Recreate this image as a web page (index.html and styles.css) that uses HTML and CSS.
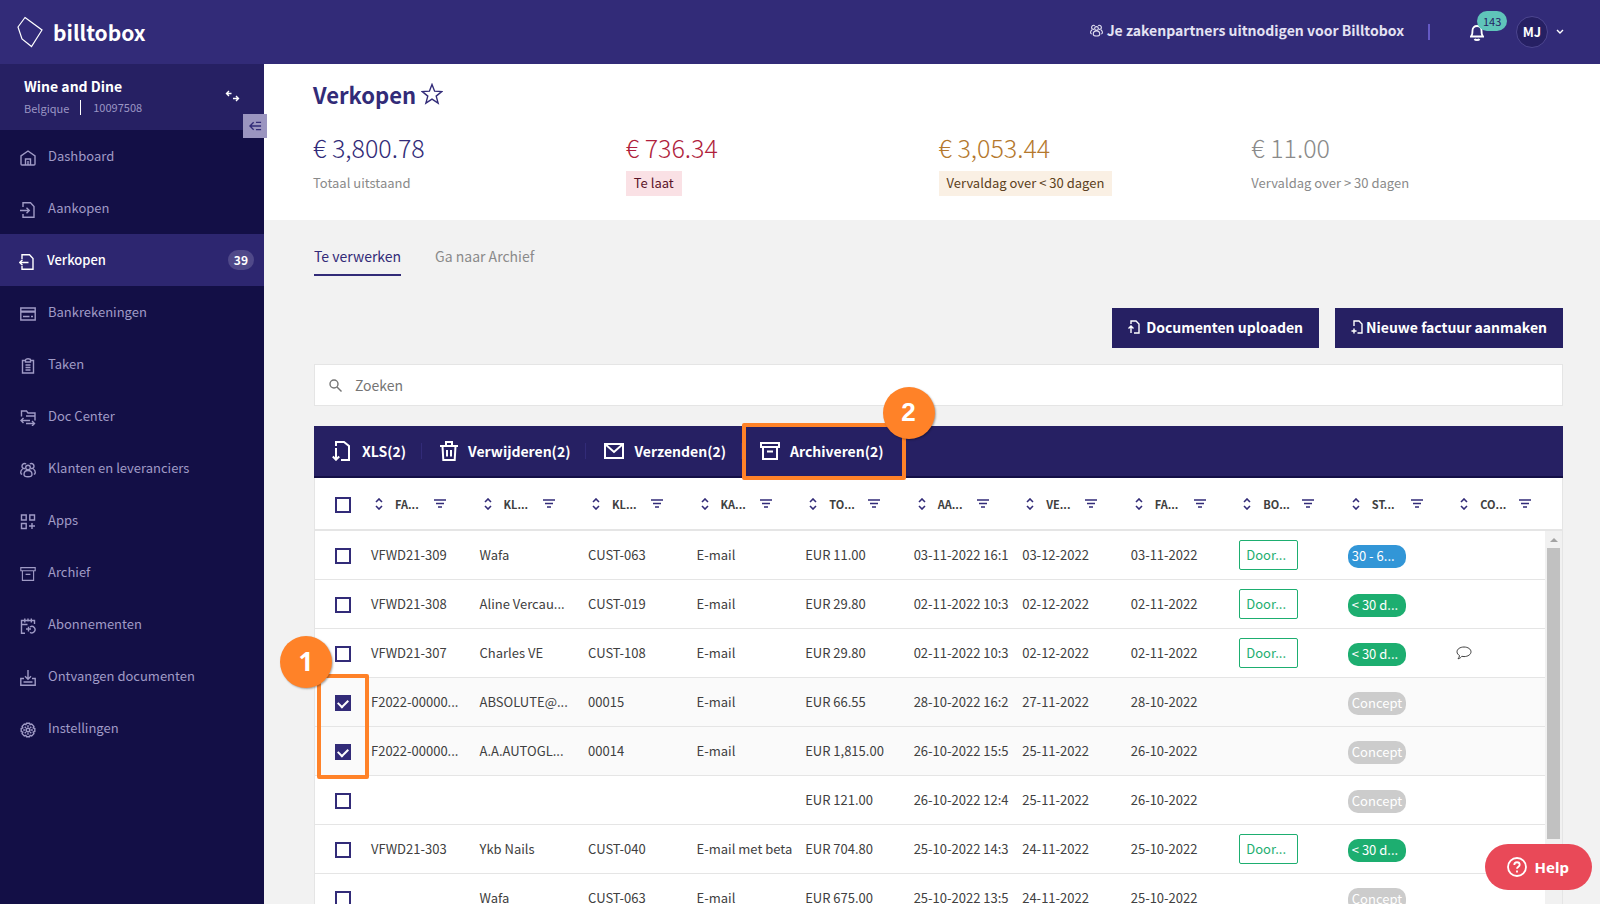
FILE: index.html
```html
<!DOCTYPE html>
<html lang="nl">
<head>
<meta charset="utf-8">
<title>Verkopen - Billtobox</title>
<link rel="stylesheet" href="styles.css">
</head>
<body>
<svg class="sprite" aria-hidden="true">
  <symbol id="i-sort" viewBox="0 0 8 12"><path d="M1 4l3-3 3 3M1 8l3 3 3-3"/></symbol>
  <symbol id="i-filter" viewBox="0 0 12 10"><path d="M0 1h12M2 4.500h8M4 8h4"/></symbol>
  <symbol id="i-people" viewBox="0 0 16 16"><circle cx="8" cy="5.500" r="2.300"/><path d="M4 12.500c0-2.600 1.800-4 4-4s4 1.400 4 4c0 1.700-1.500 2.300-4 2.300s-4-.6-4-2.300zM5 6.500C3.500 6.800 2 6 2 4.200 2 2.600 3.200 1.500 4.700 1.500c.6 0 1 .2 1.400.5M11 6.500c1.500.3 3-.5 3-2.300 0-1.600-1.200-2.700-2.700-2.700-.6 0-1 .2-1.400.5M2.600 7C1.400 7.800.7 9 .7 10.500c0 1 .5 1.600 1.500 1.900M13.400 7c1.200.8 1.900 2 1.900 3.500 0 1-.5 1.600-1.500 1.900"/></symbol>
  <symbol id="i-archive" viewBox="0 0 20 18"><path d="M1 1h18v4H1zM3 5v12h14V5M7 9.500h6"/></symbol>
</svg>

<header class="topbar">
  <a class="brand" href="#">
    <svg class="brand-mark" viewBox="0 0 26 32"><path d="M8 1.500L25 14 14.500 30.500 5 23 1 11z"/></svg>
    <span>billtobox</span>
  </a>
  <div class="top-actions">
    <a class="invite" href="#"><svg class="icon invite-icon"><use href="#i-people"/></svg>Je zakenpartners uitnodigen voor Billtobox</a>
    <span class="top-divider"></span>
    <button class="bell" aria-label="Meldingen">
      <svg class="icon bell-icon" viewBox="0 0 14 17"><path d="M1 12.500c1.500-1.500 1.500-3 1.500-6C2.500 3.500 4.500 2 7 2s4.500 1.500 4.500 4.500c0 3 0 4.500 1.500 6zM4.500 15c.6 1.300 4.400 1.300 5 0"/></svg>
      <span class="bell-count">143</span>
    </button>
    <button class="account"><span class="avatar">MJ</span><svg class="icon chevron" viewBox="0 0 8 6"><path d="M1 1l3 3 3-3"/></svg></button>
  </div>
</header>

<div class="shell">
  <aside class="sidebar">
    <div class="company">
      <div>
        <div class="company-name">Wine and Dine</div>
        <div class="company-meta"><span>Belgique</span><span class="company-id">10097508</span></div>
      </div>
      <button class="swap" aria-label="Wissel bedrijf"><svg class="icon" viewBox="0 0 14 12"><path d="M6 3.500H1M3.500 1L1 3.500 3.500 6M7.500 8.500H13M10.500 6L13 8.500 10.500 11"/></svg></button>
      <button class="collapse" aria-label="Menu inklappen"><svg class="icon" viewBox="0 0 14 10"><path d="M1 5h12M5 1L1 5l4 4M7.500 1H13M7.500 9H13"/></svg></button>
    </div>
    <nav class="nav">
      <a href="#"><svg class="icon" viewBox="0 0 16 16"><path d="M1 5.800L8 1l7 4.800V14c0 .6-.4 1-1 1H2c-.6 0-1-.4-1-1zM5.500 15V9h5v6M8 11v4"/></svg><span>Dashboard</span></a>
      <a href="#"><svg class="icon" viewBox="0 0 16 16"><path d="M3 5V.800h7.500L14 4.500v10.700H3V12M0 8.500h9M6.500 5.700l2.800 2.800-2.800 2.800"/></svg><span>Aankopen</span></a>
      <a class="active" href="#"><svg class="icon" viewBox="0 0 16 16"><path d="M3 5V.800h7.500L14 4.500v10.700H3V12M9.500 8.500H.700M3.500 5.700L.700 8.500l2.800 2.800"/></svg><span>Verkopen</span><span class="nav-count">39</span></a>
      <a href="#"><svg class="icon" viewBox="0 0 16 16"><path d="M.800 2h14.400v12H.800zM.800 5.300h14.400M.800 6h14.400M3 10.500h6.500M11 10.500h2"/></svg><span>Bankrekeningen</span></a>
      <a href="#"><svg class="icon" viewBox="0 0 16 16"><path d="M5 2.500H2.500V15h11V2.500H11M5.500 4V2c0-1.600 5-1.600 5 0v2zM5.500 7h5M5.500 9.500h5M5.500 12h5"/></svg><span>Taken</span></a>
      <a href="#"><svg class="icon" viewBox="0 0 16 16"><path d="M1.500 6.500V1h5l1.500 2h7v7.500M6 6h9M1 10.500h9M3.500 8L1 10.500 3.500 13M6 13.500h8M12 11l2.500 2.500L12 16"/></svg><span>Doc Center</span></a>
      <a href="#"><svg class="icon"><use href="#i-people"/></svg><span>Klanten en leveranciers</span></a>
      <a href="#"><svg class="icon" viewBox="0 0 16 16"><path d="M1.500 1h4.700v5H1.500zM9.800 1h4.700v5H9.800zM1.500 9.500h4.700v5H1.500zM12 9v6M9 12h6"/></svg><span>Apps</span></a>
      <a href="#"><svg class="icon"><use href="#i-archive"/></svg><span>Archief</span></a>
      <a href="#"><svg class="icon" viewBox="0 0 16 16"><path d="M5 15.200H1.500V2.500h13V6M4.800.500v4M8 .500v3M11.300.500v4M1.500 6.500h6M10 14.300A3.200 3.200 0 1 0 10 9M6 11h5M8.500 8.700V13.500"/></svg><span>Abonnementen</span></a>
      <a href="#"><svg class="icon" viewBox="0 0 16 16"><path d="M8 0v9M5 6.300l3 3 3-3M4 8.500H.800v6.700h14.400V8.500H12M3.500 12h9"/></svg><span>Ontvangen documenten</span></a>
      <a href="#"><svg class="icon" viewBox="0 0 16 16"><circle cx="8" cy="8" r="1.800"/><path d="M6.500 1.200h3l.6 1.500 1.600-.6 2.200 2.200-.7 1.500 1.600.7v3l-1.600.7.7 1.500-2.200 2.200-1.600-.6-.6 1.500h-3l-.6-1.500-1.600.6-2.200-2.200.7-1.500-1.600-.7v-3l1.600-.7-.7-1.500 2.200-2.200 1.600.6zM8 3.200v2M8 10.800v2M3.200 8h2M10.800 8h2M4.700 4.700l1.200 1.200M10.100 10.100l1.200 1.200M11.300 4.700l-1.200 1.200M5.900 10.100l-1.200 1.200"/></svg><span>Instellingen</span></a>
    </nav>
  </aside>

  <main class="main">
    <section class="summary">
      <h1>Verkopen <button class="star" aria-label="Favoriet"><svg class="icon" viewBox="0 0 22 22"><path d="M11 1.500l2.600 6.700 7.200.4-5.600 4.500 1.900 7L11 16.200l-6.100 3.900 1.900-7L1.200 8.600l7.200-.4z"/></svg></button></h1>
      <div class="stats">
        <div class="stat"><div class="amount">€ 3,800.78</div><span class="plain">Totaal uitstaand</span></div>
        <div class="stat late"><div class="amount">€ 736.34</div><span class="tag">Te laat</span></div>
        <div class="stat soon"><div class="amount">€ 3,053.44</div><span class="tag">Vervaldag over &lt; 30 dagen</span></div>
        <div class="stat later"><div class="amount">€ 11.00</div><span class="plain">Vervaldag over &gt; 30 dagen</span></div>
      </div>
    </section>

    <section class="work">
      <nav class="tabs"><a class="current" href="#">Te verwerken</a><a href="#">Ga naar Archief</a></nav>
      <div class="actions">
        <button class="primary"><svg class="icon" viewBox="0 0 12 14"><path d="M3 4V1h5l3 3v9H6M3 13V6M.500 8.500L3 6l2.500 2.500"/></svg><span>Documenten uploaden</span></button>
        <button class="primary tight"><svg class="icon" viewBox="0 0 12 14"><path d="M3 6V1h5l3 3v9H6.500M3 8.500v5M.500 11h5"/></svg><span>Nieuwe factuur aanmaken</span></button>
      </div>
      <label class="search">
        <svg class="icon" viewBox="0 0 13 13"><circle cx="5" cy="5" r="4"/><path d="M8 8l4.500 4.500"/></svg>
        <input type="text" placeholder="Zoeken" aria-label="Zoeken">
      </label>

      <div class="toolbar">
        <button><svg class="icon tool-xls" viewBox="0 0 18 20"><path d="M4 5V1h8l5 4v14H9M4 7v11.500M.800 15.500L4 18.700l3.200-3.200"/></svg><span>XLS(2)</span></button>
        <button><svg class="icon" viewBox="0 0 18 20"><path d="M0 5h18M2.500 5l.8 14h11.400l.8-14M6 5V1h6v4M7 9v6.500M11 9v6.500"/></svg><span>Verwijderen(2)</span></button>
        <button><svg class="icon wide" viewBox="0 0 20 16"><path d="M1 1h18v14H1zM1 1l9 8 9-8"/></svg><span>Verzenden(2)</span></button>
        <button class="marked"><svg class="icon wide"><use href="#i-archive"/></svg><span>Archiveren(2)</span><span class="frame"></span><span class="step step-two">2</span></button>
      </div>

      <div class="grid">
        <div class="grid-table">
        <table>
          <colgroup><col class="pick-col"><col span="11"></colgroup>
          <thead>
            <tr>
              <th><input type="checkbox" aria-label="Alles selecteren"></th>
              <th><div class="head"><svg class="sort"><use href="#i-sort"/></svg><span>FA...</span><svg class="filter"><use href="#i-filter"/></svg></div></th>
              <th><div class="head"><svg class="sort"><use href="#i-sort"/></svg><span>KL...</span><svg class="filter"><use href="#i-filter"/></svg></div></th>
              <th><div class="head"><svg class="sort"><use href="#i-sort"/></svg><span>KL...</span><svg class="filter"><use href="#i-filter"/></svg></div></th>
              <th><div class="head"><svg class="sort"><use href="#i-sort"/></svg><span>KA...</span><svg class="filter"><use href="#i-filter"/></svg></div></th>
              <th><div class="head"><svg class="sort"><use href="#i-sort"/></svg><span>TO...</span><svg class="filter"><use href="#i-filter"/></svg></div></th>
              <th><div class="head"><svg class="sort"><use href="#i-sort"/></svg><span>AA...</span><svg class="filter"><use href="#i-filter"/></svg></div></th>
              <th><div class="head"><svg class="sort"><use href="#i-sort"/></svg><span>VE...</span><svg class="filter"><use href="#i-filter"/></svg></div></th>
              <th><div class="head"><svg class="sort"><use href="#i-sort"/></svg><span>FA...</span><svg class="filter"><use href="#i-filter"/></svg></div></th>
              <th><div class="head"><svg class="sort"><use href="#i-sort"/></svg><span>BO...</span><svg class="filter"><use href="#i-filter"/></svg></div></th>
              <th><div class="head"><svg class="sort"><use href="#i-sort"/></svg><span>ST...</span><svg class="filter"><use href="#i-filter"/></svg></div></th>
              <th><div class="head"><svg class="sort"><use href="#i-sort"/></svg><span>CO...</span><svg class="filter"><use href="#i-filter"/></svg></div></th>
            </tr>
          </thead>
          <tbody>
            <tr><td><input type="checkbox" aria-label="Selecteer VFWD21-309"></td><td>VFWD21-309</td><td>Wafa</td><td>CUST-063</td><td>E-mail</td><td>EUR 11.00</td><td>03-11-2022 16:1</td><td>03-12-2022</td><td>03-11-2022</td><td><button class="book">Door...</button></td><td><span class="pill blue">30 - 6...</span></td><td></td></tr>
            <tr><td><input type="checkbox" aria-label="Selecteer VFWD21-308"></td><td>VFWD21-308</td><td>Aline Vercau...</td><td>CUST-019</td><td>E-mail</td><td>EUR 29.80</td><td>02-11-2022 10:3</td><td>02-12-2022</td><td>02-11-2022</td><td><button class="book">Door...</button></td><td><span class="pill green">&lt; 30 d...</span></td><td></td></tr>
            <tr><td><input type="checkbox" aria-label="Selecteer VFWD21-307"></td><td>VFWD21-307</td><td>Charles VE</td><td>CUST-108</td><td>E-mail</td><td>EUR 29.80</td><td>02-11-2022 10:3</td><td>02-12-2022</td><td>02-11-2022</td><td><button class="book">Door...</button></td><td><span class="pill green">&lt; 30 d...</span></td><td><svg class="comment" viewBox="0 0 16 14"><path d="M3.500 9.500C2 8.700 1 7.400 1 5.800 1 3.100 4.100 1 8 1s7 2.100 7 4.800-3.100 4.800-7 4.800c-.8 0-1.500-.1-2.200-.3C5 11.500 3.700 12.500 2 12.800c.9-1 1.400-2 1.500-3.300z"/></svg></td></tr>
            <tr class="selected"><td><div class="marked"><input type="checkbox" aria-label="Selecteer F2022-00000 (00015)" checked><span class="frame"></span><span class="step step-one">1</span></div></td><td>F2022-00000...</td><td>ABSOLUTE@...</td><td>00015</td><td>E-mail</td><td>EUR 66.55</td><td>28-10-2022 16:2</td><td>27-11-2022</td><td>28-10-2022</td><td></td><td><span class="pill grey">Concept</span></td><td></td></tr>
            <tr class="selected"><td><input type="checkbox" aria-label="Selecteer F2022-00000 (00014)" checked></td><td>F2022-00000...</td><td>A.A.AUTOGL...</td><td>00014</td><td>E-mail</td><td>EUR 1,815.00</td><td>26-10-2022 15:5</td><td>25-11-2022</td><td>26-10-2022</td><td></td><td><span class="pill grey">Concept</span></td><td></td></tr>
            <tr><td><input type="checkbox" aria-label="Selecteer concept"></td><td></td><td></td><td></td><td></td><td>EUR 121.00</td><td>26-10-2022 12:4</td><td>25-11-2022</td><td>26-10-2022</td><td></td><td><span class="pill grey">Concept</span></td><td></td></tr>
            <tr><td><input type="checkbox" aria-label="Selecteer VFWD21-303"></td><td>VFWD21-303</td><td>Ykb Nails</td><td>CUST-040</td><td>E-mail met beta</td><td>EUR 704.80</td><td>25-10-2022 14:3</td><td>24-11-2022</td><td>25-10-2022</td><td><button class="book">Door...</button></td><td><span class="pill green">&lt; 30 d...</span></td><td></td></tr>
            <tr><td><input type="checkbox" aria-label="Selecteer concept Wafa"></td><td></td><td>Wafa</td><td>CUST-063</td><td>E-mail</td><td>EUR 675.00</td><td>25-10-2022 13:5</td><td>24-11-2022</td><td>25-10-2022</td><td></td><td><span class="pill grey">Concept</span></td><td></td></tr>
          </tbody>
        </table>
        </div>
        <div class="rail"><div class="rail-head"></div><div class="rail-track"><span class="rail-arrow"></span><span class="rail-thumb"></span></div></div>
      </div>
    </section>
  </main>
</div>

<button class="help"><svg class="icon" viewBox="0 0 20 20"><circle cx="10" cy="10" r="9"/><path d="M7.300 8c0-3.800 5.400-3.500 5.400-.3 0 2-2.700 2-2.700 4.100M10 13.500v2"/></svg><span>Help</span></button>
</body>
</html>
```

FILE: styles.css
```css
* { box-sizing: border-box; }

:root {
  --ink: #322b78;
  --deep: #262063;
  --night: #130f46;
  --line: #e5e5e5;
  --orange: #ff8228;
}

body {
  margin: 0;
  height: 100vh;
  overflow: hidden;
  display: flex;
  flex-direction: column;
  background: #f2f2f2;
  color: #404040;
  font: 13px/20px "Noto Sans CJK SC", "Noto Sans", sans-serif;
}

a { color: inherit; text-decoration: none; }

button {
  margin: 0;
  padding: 0;
  border: 0;
  background: none;
  color: inherit;
  font: inherit;
  cursor: pointer;
}

svg { flex: none; fill: none; stroke: currentColor; }
.sprite { position: absolute; width: 0; height: 0; }
.icon { width: 16px; height: 16px; stroke-width: 1.400; }

/* Top bar */
.topbar {
  flex: none;
  height: 64px;
  padding: 0 36px 0 17px;
  display: flex;
  align-items: center;
  justify-content: space-between;
  background: var(--ink);
  color: #fff;
}
.brand { display: flex; align-items: center; gap: 10px; font-size: 21px; line-height: 32px; font-weight: 700; }
.brand-mark { width: 26px; height: 32px; stroke-width: 1.200; }
.top-actions { display: flex; align-items: center; }
.invite { display: flex; align-items: center; gap: 4px; padding-bottom: 4px; color: #e4e2f3; font-size: 14px; font-weight: 700; }
.invite-icon { width: 13px; height: 13px; }
.top-divider { width: 2px; height: 16px; margin: 0 28px 0 24px; background: #6459c4; }
.bell { position: relative; display: flex; margin: 0 32px 0 12px; }
.bell-icon { width: 14px; height: 17px; stroke-width: 1.800; }
.bell-count {
  position: absolute;
  left: 7px;
  bottom: 10px;
  height: 20px;
  padding: 0 6px;
  border-radius: 10px;
  background: #5fc4ba;
  color: var(--deep);
  font-size: 11px;
}
.account { display: flex; align-items: center; gap: 8px; }
.avatar {
  width: 32px;
  height: 32px;
  border: 1px solid #4d4690;
  border-radius: 50%;
  background: var(--deep);
  font-size: 13px;
  line-height: 29px;
  font-weight: 700;
}
.chevron { width: 8px; height: 6px; }

.shell { flex: 1; min-height: 0; display: flex; }

/* Sidebar */
.sidebar { position: relative; z-index: 2; flex: none; width: 264px; background: var(--night); color: #a09bc6; }
.company {
  position: relative;
  height: 66px;
  padding: 0 24px 3px;
  display: flex;
  align-items: center;
  justify-content: space-between;
  background: var(--deep);
}
.company-name { color: #fff; font-size: 14px; line-height: 24px; font-weight: 700; }
.company-meta { display: flex; align-items: center; font-size: 11px; color: #9b96c4; }
.company-id { margin-left: 11px; padding-left: 12px; border-left: 1px solid #fff; line-height: 15px; }
.swap { display: flex; color: #fff; }
.swap .icon { width: 15px; height: 12px; }
.collapse {
  position: absolute;
  right: -3px;
  bottom: -8px;
  width: 24px;
  height: 24px;
  display: flex;
  align-items: center;
  justify-content: center;
  background: #9b95c0;
  color: var(--ink);
}
.collapse .icon { width: 13px; height: 10px; }
.nav a { height: 52px; padding: 0 10px 0 20px; display: flex; align-items: center; gap: 12px; }
.nav .icon { margin-top: 4px; }
.nav .active { padding-left: 19px; background: #2d2670; color: #fff; font-weight: 500; }
.nav-count {
  margin-left: auto;
  padding: 0 6px;
  border-radius: 10px;
  background: #504989;
  font-size: 12px;
  font-weight: 700;
}

/* Summary */
.main { flex: 1; min-width: 0; display: flex; flex-direction: column; }
.summary { flex: none; height: 156px; padding: 13px 36px 0 49px; background: #fff; }
h1 { margin: 0; display: flex; align-items: center; gap: 5px; color: var(--ink); font-size: 22px; line-height: 34px; font-weight: 700; }
.star { display: flex; }
.star .icon { width: 22px; height: 22px; }
.stats { display: grid; grid-template-columns: repeat(4, 1fr); margin-top: 20px; }
.amount { color: var(--ink); font-size: 25px; line-height: 32px; font-weight: 300; margin-bottom: 8px; }
.plain, .tag { display: inline-block; line-height: 24px; color: #8a8a8a; }
.tag { padding: 0 8px 1px; }
.late .amount { color: #b01e3c; }
.late .tag { background: #fae1e5; color: #5a1428; }
.soon .amount { color: #b4782d; }
.soon .tag { background: #faf0e4; color: #5c4020; }
.later .amount { color: #8a8a8a; }

/* Work area */
.work { flex: 1; min-height: 0; display: flex; flex-direction: column; padding: 21px 37px 0 50px; }
.tabs { display: flex; gap: 34px; font-size: 14px; line-height: 30px; color: #8a8a8a; }
.tabs .current { padding-bottom: 3px; border-bottom: 2px solid var(--ink); color: var(--ink); }
.actions { display: flex; justify-content: flex-end; gap: 16px; margin: 32px 0 16px; }
.primary {
  height: 40px;
  padding: 0 16px 2px;
  display: flex;
  align-items: center;
  gap: 6px;
  background: var(--deep);
  color: #fff;
  font-size: 14px;
  font-weight: 700;
}
.primary .icon { width: 12px; height: 14px; }
.tight { gap: 3px; }
.search {
  height: 42px;
  padding: 0 14px;
  display: flex;
  align-items: center;
  gap: 11px;
  border: 1px solid var(--line);
  background: #fff;
  color: #757575;
}
.search .icon { width: 13px; height: 13px; }
.search input { flex: 1; border: 0; outline: 0; background: none; color: #404040; font: inherit; font-size: 14px; }
.search input::placeholder { color: #757575; opacity: 1; }

.toolbar {
  flex: none;
  height: 52px;
  margin-top: 20px;
  display: flex;
  align-items: center;
  border-bottom: 2px solid var(--night);
  background: var(--deep);
  color: #fff;
  font-size: 14px;
  font-weight: 700;
}
.toolbar button { height: 16px; padding: 0 15px 0 18px; display: flex; align-items: center; gap: 10px; border-right: 1px solid #322b78; }
.toolbar .icon { width: 18px; height: 20px; stroke-width: 2; }
.toolbar .wide { width: 20px; height: 18px; }
.toolbar .tool-xls { margin-right: 2px; }
.toolbar .marked { border: 0; }

/* Numbered callouts */
.marked { position: relative; z-index: 1; }
.frame { position: absolute; border: 4px solid var(--orange); border-radius: 2px; }
.toolbar .frame { inset: -20px -7px -21px 0; }
.step {
  position: absolute;
  width: 52px;
  height: 52px;
  border-radius: 50%;
  background: var(--orange);
  box-shadow: 1px 1px 2px #0005;
  color: #fff;
  font: 700 26px/50px "Liberation Sans", Arial, sans-serif;
  text-align: center;
}
.step-two { top: -56px; right: -36px; }
td .frame { top: -21px; left: -18px; width: 52px; height: 105px; }
.step-one { top: -59px; left: -55px; font-family: "Open Sans", sans-serif; }

/* Document grid */
.grid { flex: 1; min-height: 0; display: flex; border: 1px solid var(--line); border-width: 0 1px; background: #fff; }
.grid-table { flex: 1; min-width: 0; }
table { width: 100%; table-layout: fixed; border-collapse: separate; border-spacing: 0; }
.pick-col { width: 36px; }
th, td { padding: 0 0 0 20px; text-align: left; white-space: nowrap; }
th { height: 53px; border-bottom: 2px solid var(--line); font-size: 11px; font-weight: 700; }
td { height: 49px; border-bottom: 1px solid var(--line); }
.selected { background: #fafafa; }
.head { display: flex; align-items: center; padding-left: 4px; }
.head span { width: 39px; margin-left: 12px; }
.sort, .filter { color: var(--ink); stroke-width: 1.600; }
.sort { width: 8px; height: 12px; }
.filter { width: 12px; height: 10px; }
input[type="checkbox"] {
  appearance: none;
  display: grid;
  place-items: center;
  width: 16px;
  height: 16px;
  margin: 2px 0 0;
  border: 2px solid var(--ink);
  background: #fff;
}
input[type="checkbox"]:checked { background: var(--ink); }
input[type="checkbox"]:checked::after {
  content: "";
  width: 8px;
  height: 5px;
  margin-bottom: 2px;
  border: solid #fff;
  border-width: 0 0 2px 2px;
  transform: rotate(-45deg);
}
.book {
  display: block;
  width: 59px;
  height: 30px;
  padding-left: 6px;
  border: 1px solid #1dae70;
  border-radius: 2px;
  background: #fff;
  color: #1dae70;
  text-align: left;
}
.pill {
  display: block;
  width: 58px;
  height: 23px;
  margin-top: 2px;
  padding: 0 4px;
  border-radius: 10px;
  color: #fff;
  line-height: 22px;
}
.blue { background: #3296d7; }
.green { background: #1dae70; }
.grey { background: #ccc; }
.comment { display: block; width: 16px; height: 14px; color: #404040; }

.rail { flex: none; width: 17px; display: flex; flex-direction: column; }
.rail-head { height: 53px; border-bottom: 2px solid var(--line); }
.rail-track { flex: 1; display: flex; flex-direction: column; align-items: center; background: #f1f1f1; }
.rail-arrow { margin: 7px 0 6px; border: 4px solid transparent; border-top: 0; border-bottom-color: #a3a3a3; }
.rail-thumb { width: 13px; height: 291px; background: #c1c1c1; }

.help {
  position: fixed;
  right: 8px;
  bottom: 14px;
  height: 46px;
  padding: 0 23px 0 22px;
  display: flex;
  align-items: center;
  gap: 8px;
  border-radius: 23px;
  background: #e94958;
  color: #fff;
  font: 700 15px/20px "Noto Sans", sans-serif;
}
.help .icon { width: 20px; height: 20px; stroke-width: 1.800; }
```
